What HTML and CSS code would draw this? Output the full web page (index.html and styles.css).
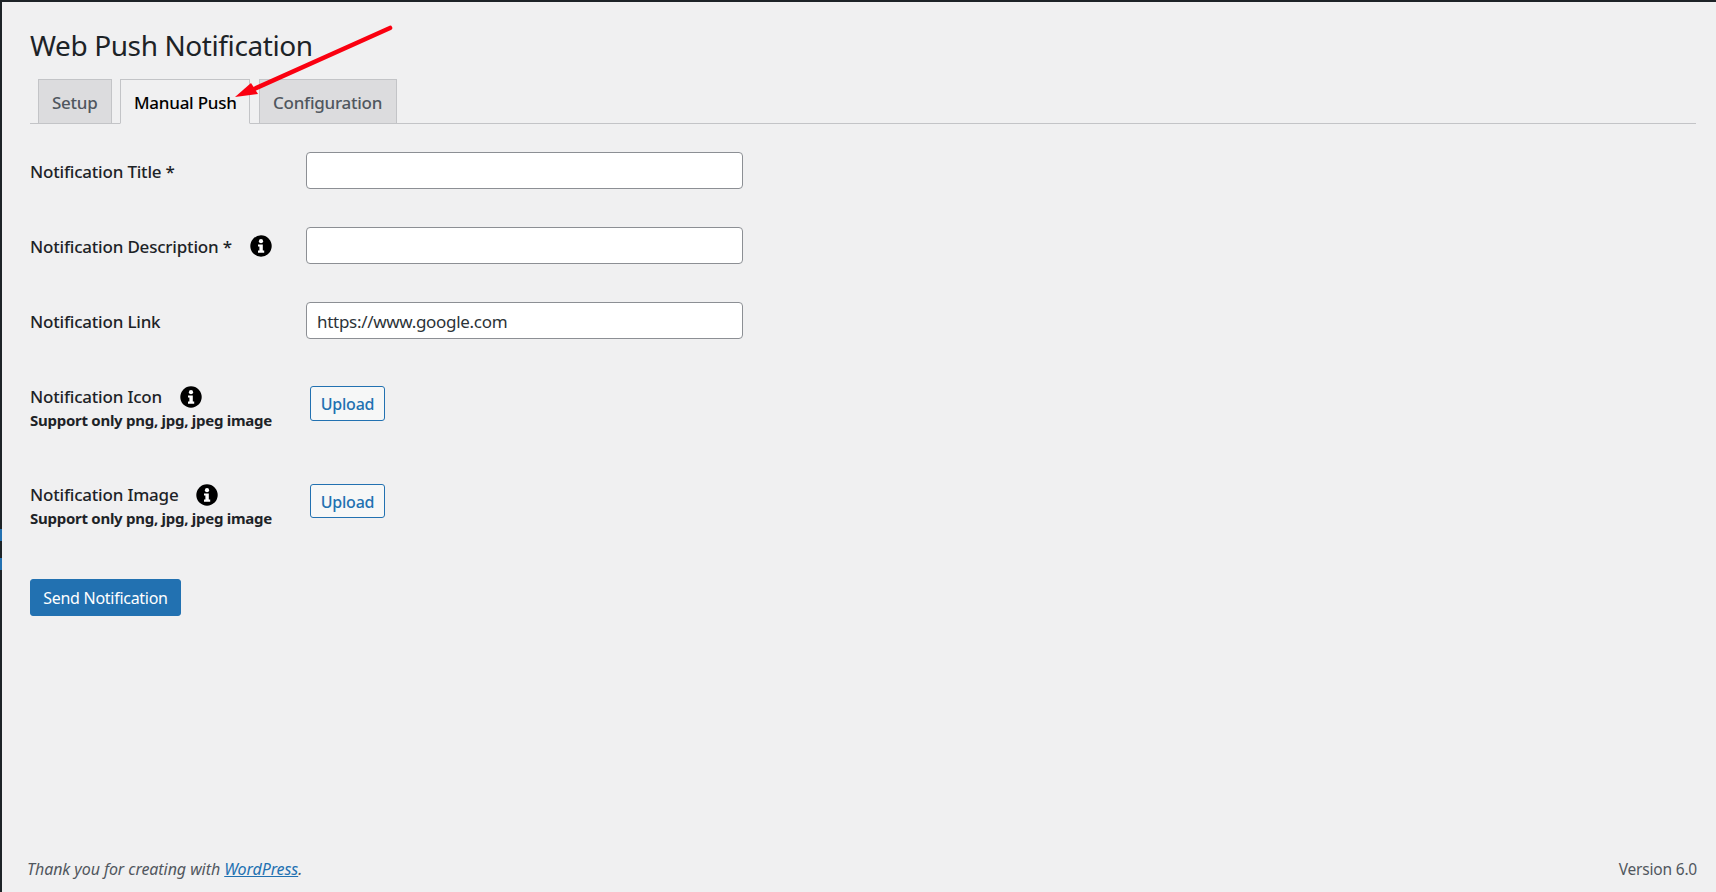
FILE: index.html
```html
<!DOCTYPE html>
<html lang="en">
<head>
<meta charset="utf-8">
<title>Web Push Notification</title>
<link rel="stylesheet" href="styles.css">
</head>
<body>
<div class="frame">
  <span class="edge edge-a"></span>
  <span class="edge edge-b"></span>
  <main class="wrap">
    <h1 class="title">Web Push Notification</h1>
    <nav class="tabs">
      <a class="tab">Setup</a>
      <a class="tab tab-active">Manual Push</a>
      <a class="tab">Configuration</a>
    </nav>
    <form class="form">
      <div class="row row-text">
        <div class="label"><span>Notification Title *</span></div>
        <input class="field" type="text">
      </div>
      <div class="row row-text">
        <div class="label"><span>Notification Description *</span>
          <svg class="info info-desc" viewBox="0 0 22 22"><use href="#i"></use></svg></div>
        <input class="field" type="text">
      </div>
      <div class="row row-text">
        <div class="label"><span>Notification Link</span></div>
        <input class="field" type="text" value="https://www.google.com">
      </div>
      <div class="row row-upload">
        <div>
          <div class="label"><span>Notification Icon</span>
            <svg class="info" viewBox="0 0 22 22"><use href="#i"></use></svg></div>
          <p class="hint">Support only png, jpg, jpeg image</p>
        </div>
        <button class="upload" type="button">Upload</button>
      </div>
      <div class="row row-upload row-upload-last">
        <div>
          <div class="label"><span>Notification Image</span>
            <svg class="info" viewBox="0 0 22 22"><use href="#i"></use></svg></div>
          <p class="hint">Support only png, jpg, jpeg image</p>
        </div>
        <button class="upload" type="button">Upload</button>
      </div>
      <button class="send" type="button">Send Notification</button>
    </form>
  </main>
  <footer class="footer">
    <span class="thanks">Thank you for creating with <a class="wp">WordPress</a>.</span>
    <span class="version">Version 6.0</span>
  </footer>
  <svg class="arrow" viewBox="0 0 180 90" width="180" height="90">
    <path d="M168 5 L30 67" stroke="#fa0010" stroke-width="4.6" stroke-linecap="round" fill="none"></path>
    <path d="M13 74 L29 60 L36 71 Z" fill="#fa0010"></path>
  </svg>
</div>
<svg class="defs" width="0" height="0">
  <symbol id="i" viewBox="0 0 22 22">
    <circle cx="11" cy="11" r="10.7" fill="#000"></circle>
    <circle cx="11" cy="6.2" r="2.1" fill="#fff"></circle>
    <path d="M8 9.4h4.8v6.2h1.4v2.2H8v-2.2h1.4v-4H8z" fill="#fff"></path>
  </symbol>
</svg>
</body>
</html>
```
FILE: styles.css
```css
* { box-sizing: border-box; }
html, body { margin: 0; height: 100%; }
body {
  background: #f0f0f1;
  color: #1d2327;
  font-family: "Noto Sans", "Open Sans", sans-serif;
  font-size: 17px;
  overflow: hidden;
}
.frame {
  position: relative;
  height: 892px;
  border-top: 2px solid #1d2327;
  border-left: 2px solid #1d2327;
  display: flex;
  flex-direction: column;
}
.edge {
  position: absolute;
  left: -2px;
  width: 2px;
  height: 12px;
  background: #2271b1;
}
.edge-a { top: 527px; }
.edge-b { top: 556px; }
.wrap { padding: 0 20px 0 28px; flex: 1; }
.title {
  margin: 0;
  padding-top: 24px;
  height: 77px;
  font-size: 28px;
  line-height: 38px;
  font-weight: 400;
  letter-spacing: -0.4px;
}
.tabs {
  display: flex;
  height: 45px;
  padding-left: 8px;
  gap: 8px;
  border-bottom: 1px solid #c3c4c7;
}
.tab {
  height: 45px;
  padding: 1px 13px 0;
  border: 1px solid #c3c4c7;
  background: #dcdcde;
  color: #50575e;
  font-size: 17px;
  line-height: 43px;
  font-weight: 500;
  letter-spacing: -0.25px;
  white-space: nowrap;
}
.tab:nth-child(1) { width: 74px; }
.tab:nth-child(2) { width: 130px; }
.tab:nth-child(3) { width: 138px; margin-left: 1px; }
.tab-active {
  background: #f0f0f1;
  border-bottom-color: #f0f0f1;
  color: #000;
}
.form { display: block; padding-top: 28px; }
.row { display: grid; grid-template-columns: 276px 437px; }
.row-text { height: 75px; }
.row-upload { height: 98px; padding-top: 6px; }
.row-upload-last { height: 104px; }
.label {
  display: flex;
  align-items: center;
  height: 37px;
  padding-top: 1px;
  font-size: 17px;
  font-weight: 500;
  letter-spacing: -0.2px;
  white-space: nowrap;
}
.row-upload .label { height: 26px; }
.info { width: 22px; height: 22px; margin-left: 17.5px; flex: none; }
.info-desc { margin-left: 18px; }
.hint {
  margin: 1px 0 0;
  font-size: 15px;
  line-height: 20px;
  font-weight: 700;
  letter-spacing: -0.27px;
  white-space: nowrap;
}
.field {
  display: block;
  width: 437px;
  height: 37px;
  padding: 1px 10px 0;
  border: 1px solid #8c8f94;
  border-radius: 4px;
  background: #fff;
  color: #2c3338;
  font-family: inherit;
  font-size: 17px;
  letter-spacing: -0.3px;
}
.upload {
  justify-self: start;
  margin: 3px 0 0 4px;
  width: 75px;
  height: 35px;
  padding: 0;
  border: 1px solid #2271b1;
  border-radius: 3px;
  background: #f6f7f7;
  color: #2271b1;
  font-family: inherit;
  font-size: 16px;
  font-weight: 500;
  letter-spacing: -0.23px;
}
.row-upload-last .upload { height: 34px; padding-top: 1px; }
.send {
  display: block;
  width: 151px;
  height: 37px;
  padding: 0;
  border: 1px solid #2271b1;
  border-radius: 3px;
  background: #2271b1;
  color: #fff;
  font-family: inherit;
  font-size: 16px;
  letter-spacing: -0.28px;
}
.footer {
  display: flex;
  justify-content: space-between;
  padding: 3px 19px 0 25px;
  height: 38px;
  font-size: 16px;
  line-height: 24px;
  color: #50575e;
}
.thanks { font-style: italic; letter-spacing: -0.07px; }
.version { font-size: 15.5px; letter-spacing: -0.2px; }
.wp { color: #2271b1; text-decoration: underline; }
.arrow { position: absolute; left: 220px; top: 21px; pointer-events: none; }
.defs { position: absolute; }
```
